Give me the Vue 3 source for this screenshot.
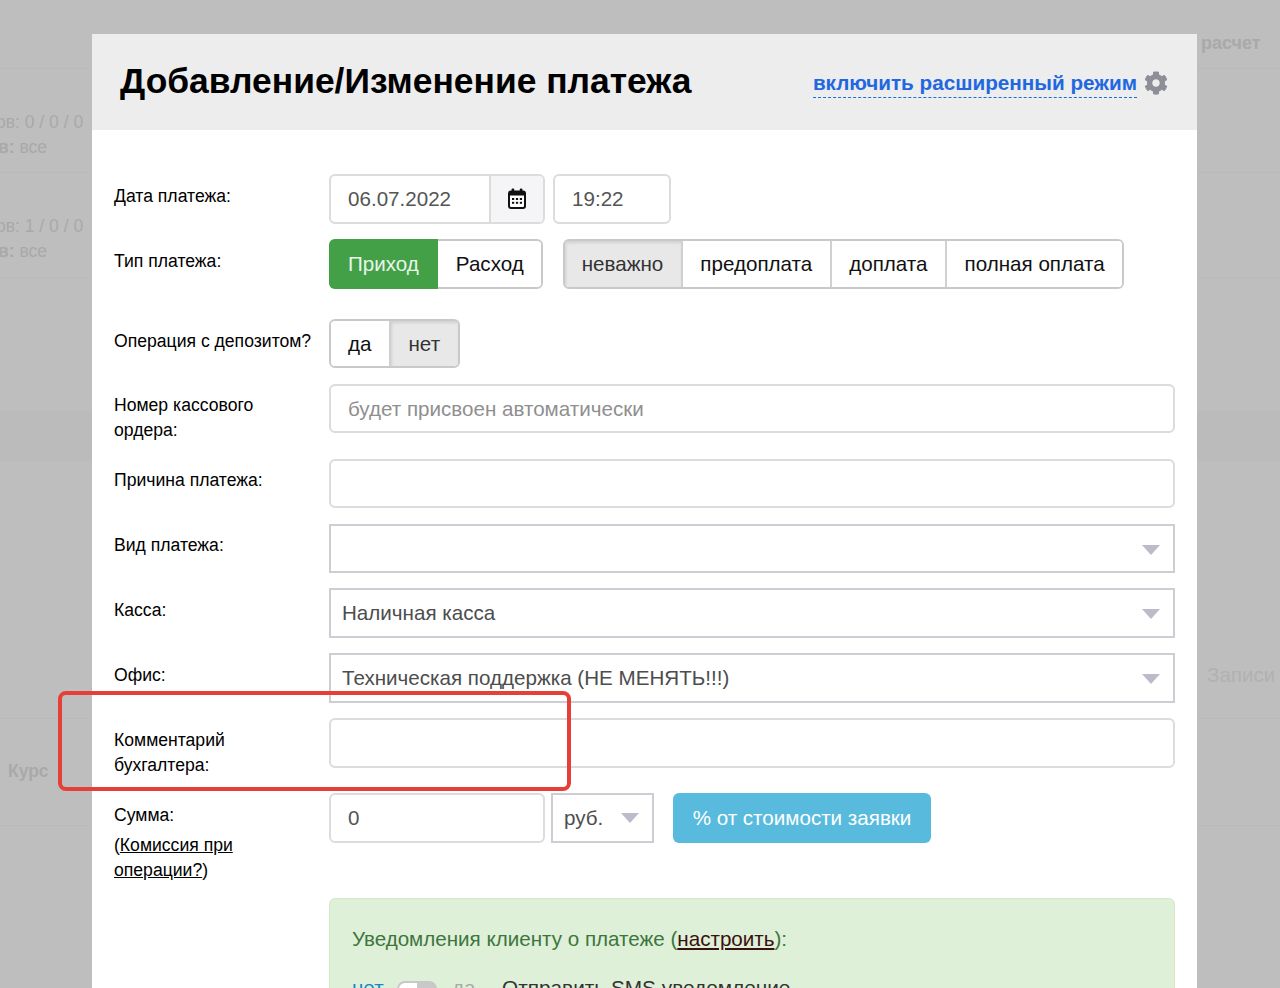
<script setup>
const rows = [
  { label: 'Вид платежа:', value: '' },
  { label: 'Касса:', value: 'Наличная касса' },
  { label: 'Офис:', value: 'Техническая поддержка (НЕ МЕНЯТЬ!!!)' },
]
const payTypes = ['неважно', 'предоплата', 'доплата', 'полная оплата']
</script>

<template>
  <div class="page">
    <div class="backdrop">
      <div class="bg-row r1"><span class="bg-left"></span><b class="bg-right">расчет</b></div>
      <div class="bg-row r2">
        <div class="bg-left"><div>ов: 0 / 0 / 0</div><div class="second"><b>в:</b> все</div></div>
      </div>
      <div class="bg-row r3">
        <div class="bg-left"><div>ов: 1 / 0 / 0</div><div class="second"><b>в:</b> все</div></div>
      </div>
      <div class="bg-row r4"></div>
      <div class="bg-row r5"></div>
      <div class="bg-row r6"><span class="bg-left"></span><span class="bg-right zap">Записи</span></div>
      <div class="bg-row r7"><b class="bg-kurs">Курс</b></div>
    </div>

    <div class="modal">
      <header class="modal-head">
        <h1>Добавление/Изменение платежа</h1>
        <div class="mode">
          <span class="mode-link">включить расширенный режим</span>
          <svg class="gear" viewBox="0 0 512 512"><path fill="#8e8e98" d="M487.4 315.7l-42.6-24.6c4.3-23.2 4.3-47 0-70.2l42.6-24.6c4.9-2.8 7.1-8.6 5.5-14-11.1-35.6-30-67.8-54.7-94.6-3.8-4.1-10-5.1-14.8-2.3L380.8 110c-17.9-15.4-38.5-27.3-60.8-35.1V25.8c0-5.6-3.9-10.5-9.4-11.7-36.7-8.2-74.3-7.8-109.2 0-5.5 1.2-9.4 6.1-9.4 11.7V75c-22.2 7.9-42.8 19.8-60.8 35.1L88.7 85.5c-4.9-2.8-11-1.9-14.8 2.3-24.7 26.7-43.6 58.9-54.7 94.6-1.7 5.4.6 11.2 5.5 14L67.3 221c-4.3 23.2-4.3 47 0 70.2l-42.6 24.6c-4.9 2.8-7.1 8.6-5.5 14 11.1 35.6 30 67.8 54.7 94.6 3.8 4.1 10 5.1 14.8 2.3l42.6-24.6c17.9 15.4 38.5 27.3 60.8 35.1v49.2c0 5.6 3.9 10.5 9.4 11.7 36.7 8.2 74.3 7.8 109.2 0 5.5-1.2 9.4-6.1 9.4-11.7v-49.2c22.2-7.9 42.8-19.8 60.8-35.1l42.6 24.6c4.9 2.8 11 1.9 14.8-2.3 24.7-26.7 43.6-58.9 54.7-94.6 1.5-5.5-.7-11.3-5.6-14.1zM256 336c-44.1 0-80-35.9-80-80s35.9-80 80-80 80 35.9 80 80-35.9 80-80 80z"/></svg>
        </div>
      </header>

      <div class="form">
        <div class="row">
          <div class="label">Дата платежа:</div>
          <div class="controls">
            <div class="date">
              <div class="date-val">06.07.2022</div>
              <div class="date-btn">
                <svg class="cal" width="18" height="21" viewBox="0 0 18 21">
                  <rect x="1" y="3.5" width="16" height="16.5" rx="2" fill="#fff" stroke="#111" stroke-width="2"/>
                  <rect x="1" y="3" width="16" height="4.5" fill="#111"/>
                  <rect x="3.6" y="0.5" width="2.6" height="4" rx="1" fill="#111"/>
                  <rect x="11.8" y="0.5" width="2.6" height="4" rx="1" fill="#111"/>
                  <g fill="#111">
                    <rect x="4" y="10" width="2.2" height="2"/><rect x="7.9" y="10" width="2.2" height="2"/><rect x="11.8" y="10" width="2.2" height="2"/>
                    <rect x="4" y="13.8" width="2.2" height="2"/><rect x="7.9" y="13.8" width="2.2" height="2"/><rect x="11.8" y="13.8" width="2.2" height="2"/>
                  </g>
                </svg>
              </div>
            </div>
            <div class="field time">19:22</div>
          </div>
        </div>

        <div class="row type-row">
          <div class="label">Тип платежа:</div>
          <div class="controls seg-gap">
            <div class="seg seg-pay">
              <span class="seg-btn green">Приход</span>
              <span class="seg-btn">Расход</span>
            </div>
            <div class="seg">
              <span v-for="(t, i) in payTypes" :key="t" class="seg-btn" :class="{ on: i === 0 }">{{ t }}</span>
            </div>
          </div>
        </div>

        <div class="row">
          <div class="label">Операция с депозитом?</div>
          <div class="controls">
            <div class="seg">
              <span class="seg-btn">да</span>
              <span class="seg-btn on">нет</span>
            </div>
          </div>
        </div>

        <div class="row">
          <div class="label">Номер кассового ордера:</div>
          <div class="controls"><div class="field wide placeholder">будет присвоен автоматически</div></div>
        </div>

        <div class="row">
          <div class="label">Причина платежа:</div>
          <div class="controls"><div class="field wide"></div></div>
        </div>

        <div v-for="r in rows" :key="r.label" class="row">
          <div class="label">{{ r.label }}</div>
          <div class="controls">
            <div class="select wide"><span>{{ r.value }}</span><i class="arrow"></i></div>
          </div>
        </div>

        <div class="row">
          <div class="label">Комментарий бухгалтера:</div>
          <div class="controls"><div class="field wide"></div></div>
        </div>

        <div class="row sum-row">
          <div class="label">Сумма:<div class="fee">(<u>Комиссия при<br>операции?</u>)</div></div>
          <div class="controls">
            <div class="field sum">0</div>
            <div class="select cur"><span>руб.</span><i class="arrow"></i></div>
            <div class="info-btn">% от стоимости заявки</div>
          </div>
        </div>

        <div class="row notice-row">
          <div class="label"></div>
          <div class="notice">
            <div class="notice-title">Уведомления клиенту о платеже (<u>настроить</u>):</div>
            <div class="notice-line">
              <span class="no">нет</span>
              <span class="toggle"></span>
              <span class="yes">да</span>
              <span class="send">Отправить SMS уведомление</span>
            </div>
          </div>
        </div>
      </div>
    </div>

    <div class="marker"></div>
  </div>
</template>

<style>
html, body { margin: 0; padding: 0; }
</style>

<style scoped>
.page {
  position: relative;
  width: 1280px;
  height: 988px;
  overflow: hidden;
  background: #bebebe;
  font-family: "Liberation Sans", Arial, sans-serif;
  color: #000;
}
.bg-row {
  display: flex;
  justify-content: space-between;
  box-sizing: border-box;
  border-bottom: 1px solid #bababa;
  color: #a9a9a9;
  font-size: 17.5px;
  line-height: 25px;
}
.r1 { height: 69px; padding-top: 31px; }
.r2 { height: 104px; padding-top: 41px; }
.r3 { height: 105px; padding-top: 41px; }
.r4 { height: 133px; border-bottom: 0; }
.r5 { height: 50px; background: #bbbbbb; border-bottom: 0; }
.r6 { height: 258px; padding-top: 201px; }
.r7 { height: 107px; padding-top: 40px; }
.bg-left { width: 87px; margin-left: -4px; flex: none; white-space: nowrap; }
.second { padding-left: 2px; }
.bg-right { margin-left: auto; width: 79px; white-space: nowrap; font-size: 18px; }
.zap { width: 73px; font-size: 20.6px; color: #b1b1b1; font-weight: 400; }
.bg-kurs { margin-left: 8px; font-size: 17.5px; }

.modal {
  position: absolute;
  left: 92px;
  top: 34px;
  width: 1105px;
  height: 960px;
  background: #fff;
}
.modal-head {
  height: 96px;
  box-sizing: border-box;
  background: #ededed;
  display: flex;
  align-items: center;
  justify-content: space-between;
  padding: 0 29px 0 28px;
}
h1 {
  margin: 0 0 2px;
  font-size: 35.4px;
  line-height: 44px;
  font-weight: 700;
}
.mode { display: flex; align-items: center; gap: 7px; }
.mode-link {
  color: #2168e0;
  font-size: 20.7px;
  font-weight: 700;
  line-height: 27px;
  padding-bottom: 1px;
  border-bottom: 1.5px dashed #2168e0;
  margin-top: 2.5px;
}
.gear { width: 24px; height: 24px; margin-top: 2px; }

.form { padding: 44.3px 22px 0 22px; }
.row { display: flex; margin-bottom: 15.4px; }
.type-row { margin-bottom: 30.3px; }
.sum-row { margin-bottom: 13px; min-height: 92px; }
.label {
  width: 215px;
  flex: none;
  box-sizing: border-box;
  padding-top: 9.6px;
  padding-right: 10px;
  font-size: 17.6px;
  line-height: 24.9px;
}
.fee { margin-top: 5.4px; line-height: 25.2px; }
.controls { display: flex; flex: 1; gap: 8px; align-items: flex-start; }
.seg-gap { gap: 20px; }

.field, .date, .select, .seg, .info-btn {
  height: 49.5px;
  box-sizing: border-box;
  font-size: 20.6px;
}
.field {
  border: 2px solid #dcdcdc;
  border-radius: 6px;
  padding: 0 17px;
  line-height: 46px;
  color: #555;
}
.wide { width: 846px; }
.placeholder { color: #8f8f8f; }
.date {
  display: flex;
  width: 216px;
  border: 2px solid #dcdcdc;
  border-radius: 6px;
  overflow: hidden;
}
.date-val { flex: 1; padding: 0 17px; line-height: 46px; color: #555; }
.date-btn {
  width: 52px;
  background: #f5f5f7;
  border-left: 2px solid #dcdcdc;
  display: flex;
  align-items: center;
  justify-content: center;
}
.cal { margin-bottom: 2px; }
.time { width: 118px; }
.sum { width: 216px; }
.seg {
  display: inline-flex;
  border: 2px solid #c9c9c9;
  border-radius: 6px;
  overflow: hidden;
}
.seg-pay { overflow: visible; }
.seg-btn {
  padding: 0 17.5px;
  line-height: 46px;
  border-left: 2px solid #d0d0d0;
  color: #111;
  background: #fff;
}
.seg-btn:first-child { border-left: 0; padding-left: 17px; }
.seg-btn.on { background: #e8e8e8; color: #333; box-shadow: inset 1px 2px 3px rgba(0,0,0,.1); }
.seg-btn.green {
  background: #43a047;
  color: #e9f5e9;
  margin: -2px 0 -2px -2px;
  padding: 2px 19px;
  border-radius: 6px 0 0 6px;
}
.green + .seg-btn {
  border-left: 0;
  padding: 0 17px 0 18px;
  border-radius: 0 4px 4px 0;
}
.select {
  position: relative;
  border: 2px solid #cdcdd4;
  padding: 0 11px;
  line-height: 46px;
  color: #4d4d4d;
}
.arrow {
  position: absolute;
  right: 13px;
  top: 19px;
  width: 0;
  height: 0;
  border-left: 9px solid transparent;
  border-right: 9px solid transparent;
  border-top: 10px solid #bbbbca;
}
.cur { width: 103px; margin-left: -2px; }
.cur .arrow { right: 13px; top: 18px; }
.info-btn {
  margin-left: 11px;
  width: 258px;
  background: #58bbdd;
  border-radius: 6px;
  color: #fff;
  line-height: 49.5px;
  text-align: center;
}
.notice {
  width: 846px;
  box-sizing: border-box;
  height: 200px;
  background: #dff0d8;
  border: 1px solid #d6e9c6;
  border-radius: 6px;
  padding: 27px 22px;
  color: #3c763d;
  font-size: 20.6px;
  line-height: 25px;
}
.notice u { color: #3b1010; }
.notice-line { display: flex; align-items: flex-start; margin-top: 25px; line-height: 24px; }
.no { color: #1a86c8; width: 45px; }
.toggle {
  width: 40px;
  height: 24px;
  margin-top: 4.5px;
  box-sizing: border-box;
  border: 2px solid #c8c8c8;
  border-radius: 8px;
  background: linear-gradient(90deg, #fff 50%, #c9c9c9 50%);
}
.yes { color: #aaa; margin-left: 15px; width: 50px; }
.send { color: #333; font-size: 20.8px; }

.marker {
  position: absolute;
  left: 58px;
  top: 691px;
  width: 513px;
  height: 100px;
  box-sizing: border-box;
  border: 4px solid #e53f36;
  border-radius: 8px;
}
</style>
